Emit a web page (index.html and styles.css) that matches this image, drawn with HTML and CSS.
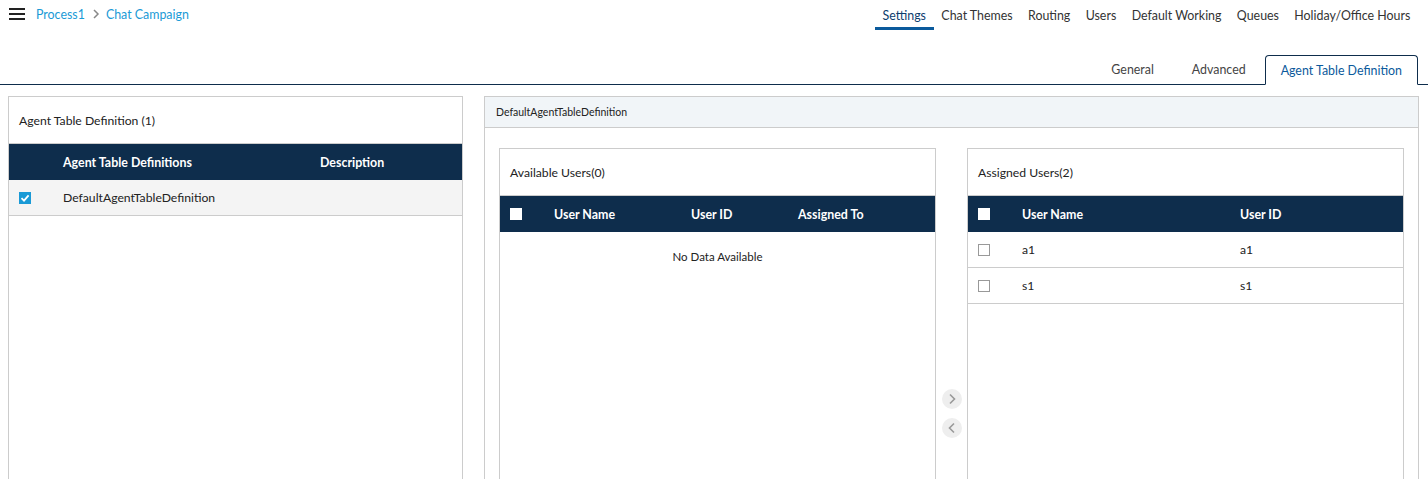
FILE: index.html
```html
<!DOCTYPE html>
<html>
<head>
<meta charset="utf-8">
<link rel="stylesheet" href="styles.css">
</head>
<body>
<div class="topbar">
  <div class="crumbs">
    <svg class="burger" width="16" height="12" viewBox="0 0 16 12"><rect x="0" y="0" width="16" height="2" fill="#222"/><rect x="0" y="5" width="16" height="2" fill="#222"/><rect x="0" y="10" width="16" height="2" fill="#222"/></svg>
    <span class="crumb">Process1</span>
    <svg class="sep" width="8" height="10" viewBox="0 0 8 10"><path d="M2 1 L6 5 L2 9" fill="none" stroke="#888" stroke-width="1.5"/></svg>
    <span class="crumb">Chat Campaign</span>
  </div>
  <nav class="topnav">
    <span class="nav-item active">Settings</span>
    <span class="nav-item">Chat Themes</span>
    <span class="nav-item">Routing</span>
    <span class="nav-item">Users</span>
    <span class="nav-item">Default Working</span>
    <span class="nav-item">Queues</span>
    <span class="nav-item">Holiday/Office Hours</span>
  </nav>
</div>
<div class="subtabs">
  <span class="subtab">General</span>
  <span class="subtab">Advanced</span>
  <span class="subtab active">Agent Table Definition</span>
</div>
<div class="main">
  <section class="left-panel">
    <div class="panel-title">Agent Table Definition (1)</div>
    <div class="trow thead">
      <span class="c-check"></span>
      <span class="c-def">Agent Table Definitions</span>
      <span class="c-desc">Description</span>
    </div>
    <div class="trow selected">
      <span class="c-check"><span class="cb checked"><svg width="12" height="12" viewBox="0 0 12 12"><path d="M2.5 6.2 L5 8.6 L9.6 3.4" fill="none" stroke="#fff" stroke-width="1.8"/></svg></span></span>
      <span class="c-def">DefaultAgentTableDefinition</span>
      <span class="c-desc"></span>
    </div>
  </section>
  <section class="right-panel">
    <div class="rp-head">DefaultAgentTableDefinition</div>
    <div class="rp-body">
      <div class="box">
        <div class="panel-title">Available Users(0)</div>
        <div class="trow thead">
          <span class="c-check"><span class="cb white"></span></span>
          <span class="c-uname">User Name</span>
          <span class="c-uid">User ID</span>
          <span class="c-assigned">Assigned To</span>
        </div>
        <div class="nodata">No Data Available</div>
      </div>
      <div class="arrows">
        <span class="arrow"><svg width="10" height="12" viewBox="0 0 10 12"><path d="M3 1.5 L7.5 6 L3 10.5" fill="none" stroke="#999" stroke-width="1.6"/></svg></span>
        <span class="arrow"><svg width="10" height="12" viewBox="0 0 10 12"><path d="M7 1.5 L2.5 6 L7 10.5" fill="none" stroke="#999" stroke-width="1.6"/></svg></span>
      </div>
      <div class="box">
        <div class="panel-title">Assigned Users(2)</div>
        <div class="trow thead">
          <span class="c-check"><span class="cb white"></span></span>
          <span class="c-uname2">User Name</span>
          <span class="c-uid2">User ID</span>
        </div>
        <div class="trow brow">
          <span class="c-check"><span class="cb"></span></span>
          <span class="c-uname2">a1</span>
          <span class="c-uid2">a1</span>
        </div>
        <div class="trow brow">
          <span class="c-check"><span class="cb"></span></span>
          <span class="c-uname2">s1</span>
          <span class="c-uid2">s1</span>
        </div>
      </div>
    </div>
  </section>
</div>
</body>
</html>
```
FILE: styles.css
```css
* { box-sizing: border-box; }
html, body { margin: 0; padding: 0; }
body {
  font-family: Lato, "Open Sans", sans-serif;
  font-size: 12.2px;
  color: #222;
  background: #fff;
  height: 479px;
  overflow: hidden;
}
.topbar {
  display: flex;
  justify-content: space-between;
  align-items: flex-start;
  height: 55px;
}
.crumbs {
  display: flex;
  align-items: center;
  padding: 6px 0 0 9px;
  height: 22px;
}
.burger { margin-right: 11px; }
.crumb { color: #1a9ad6; font-size: 12.4px; }
.sep { margin: 0 6px 0 7px; }
.topnav {
  display: flex;
  padding: 6px 10px 0 0;
}
.nav-item {
  padding: 1px 7.7px 0;
  height: 24px;
  line-height: 18px;
  font-size: 12.4px;
  color: #333;
}
.nav-item.active {
  color: #0d3d6e;
  border-bottom: 3px solid #0b5a9c;
}
.subtabs {
  display: flex;
  justify-content: flex-end;
  border-bottom: 1px solid #0e2d4c;
  padding-right: 10px;
  height: 30px;
}
.subtab {
  padding: 0 19px;
  line-height: 30px;
  font-size: 12.4px;
  color: #444;
}
.subtab.active {
  color: #0b5a9c;
  border: 1px solid #0e2d4c;
  border-bottom: 1px solid #fff;
  border-radius: 4px 4px 0 0;
  margin-bottom: -1px;
  padding: 0 15px;
  line-height: 29px;
  height: 30px;
  background: #fff;
}
.main {
  display: flex;
  gap: 21px;
  padding: 11px 10px 0 8px;
}
.left-panel {
  flex: 0 0 455px;
  height: 400px;
  border: 1px solid #ccc;
}
.panel-title {
  height: 47px;
  line-height: 47px;
  padding-left: 10px;
  color: #222;
  border-bottom: 1px solid #ccc;
}
.trow {
  display: flex;
  align-items: center;
  height: 36px;
}
.thead {
  background: #0e2d4c;
  color: #fff;
  font-weight: 700;
  height: 36px;
  font-size: 12.4px;
}
.left-panel .trow.selected {
  background: #f4f4f4;
  border-bottom: 1px solid #ccc;
  height: 36px;
}
.c-check { width: 54px; padding-left: 10px; display: flex; align-items: center; }
.c-def { width: 257px; }
.c-desc { flex: 1; }
.cb {
  display: inline-block;
  width: 12px;
  height: 12px;
  border: 1px solid #999;
  background: #fff;
}
.cb.white { border: none; background: #fff; }
.cb.checked { border: none; background: #1a9ad6; }
.cb svg { display: block; }
.right-panel {
  flex: 0 0 935px;
  height: 400px;
  border: 1px solid #ccc;
}
.rp-head {
  height: 31px;
  line-height: 30px;
  background: #f1f5f8;
  border-bottom: 1px solid #ccc;
  padding-left: 11px;
  font-size: 10.5px;
  color: #222;
}
.rp-body {
  display: flex;
  padding: 20px 14px 0 14px;
}
.box {
  flex: 0 0 437px;
  height: 340px;
  border: 1px solid #ccc;
}
.c-uname { width: 137px; }
.c-uid { width: 107px; }
.c-assigned { flex: 1; }
.c-uname2 { width: 218px; }
.c-uid2 { flex: 1; }
.brow {
  border-bottom: 1px solid #ccc;
  color: #222;
}
.nodata {
  text-align: center;
  padding-top: 18px;
  font-size: 11.5px;
}
.arrows {
  flex: 0 0 31px;
  display: flex;
  flex-direction: column;
  align-items: center;
  gap: 9px;
  padding-top: 241px;
}
.arrow {
  width: 20px;
  height: 20px;
  border-radius: 50%;
  background: #eee;
  display: flex;
  align-items: center;
  justify-content: center;
}
```
